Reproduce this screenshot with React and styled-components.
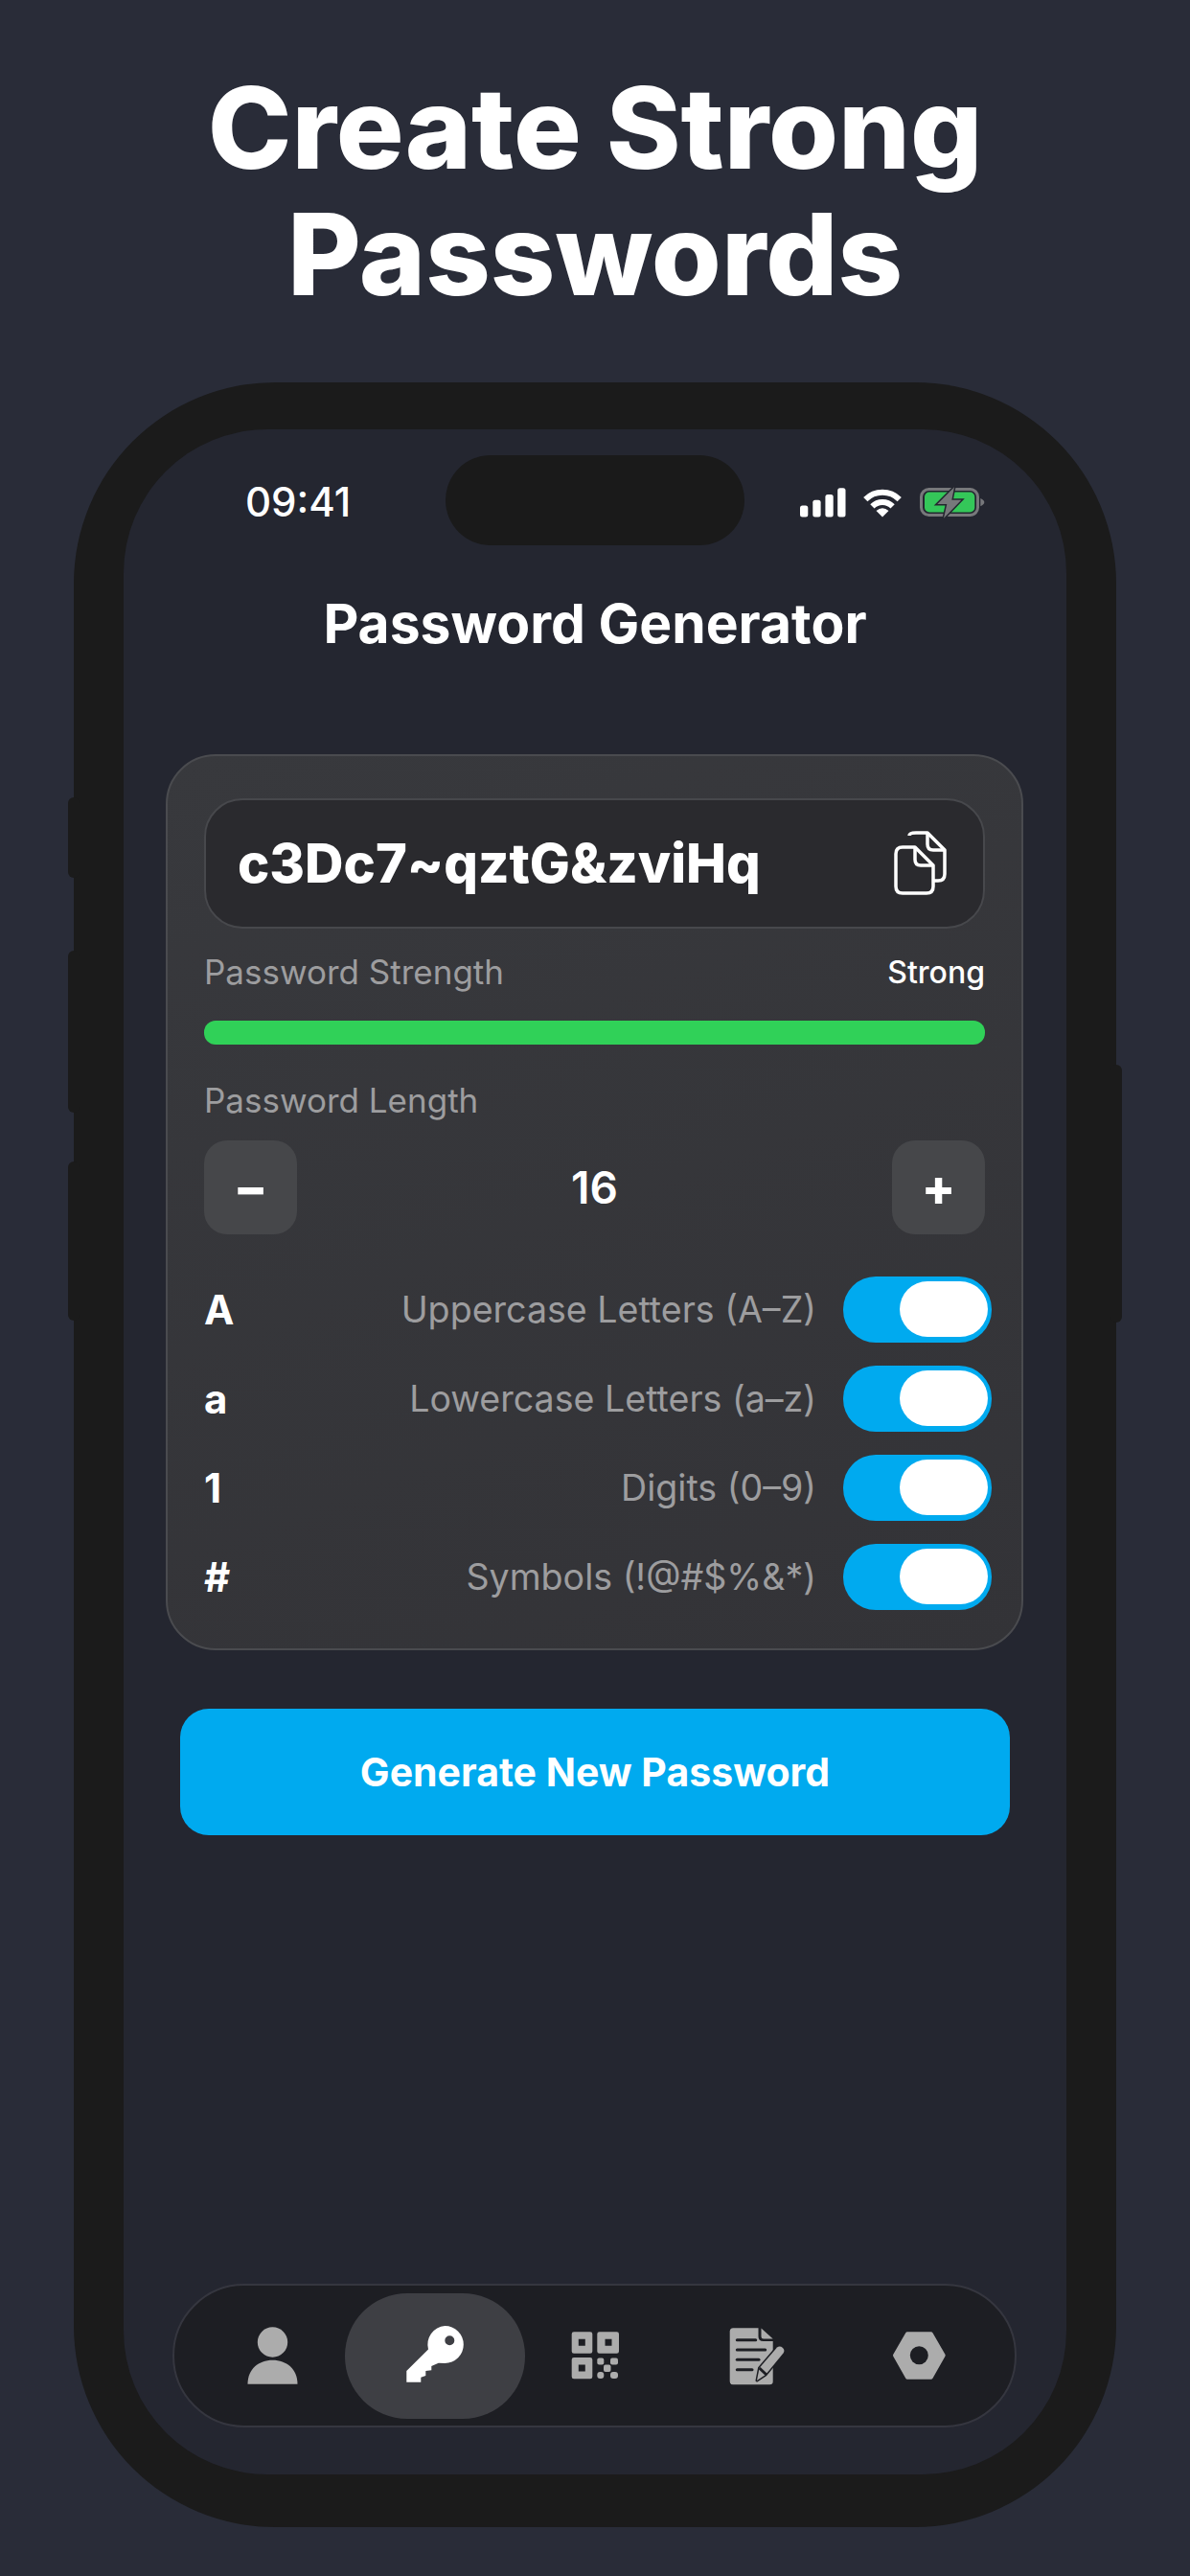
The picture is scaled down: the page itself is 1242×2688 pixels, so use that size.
import styled, { createGlobalStyle } from "styled-components";

const GlobalStyle = createGlobalStyle`
  html, body {
    margin: 0;
    padding: 0;
    background: #292c38;
  }
  * {
    box-sizing: border-box;
  }
`;

const OPTIONS = [
  { glyph: "A", label: "Uppercase Letters (A–Z)" },
  { glyph: "a", label: "Lowercase Letters (a–z)" },
  { glyph: "1", label: "Digits (0–9)" },
  { glyph: "#", label: "Symbols (!@#$%&*)" },
];

function SignalIcon() {
  return (
    <svg width="49" height="32" viewBox="0 0 49 32" fill="#fff">
      <rect x="1" y="19.5" width="8.3" height="12" rx="2.5" />
      <rect x="14.3" y="13.7" width="8.3" height="17.8" rx="2.5" />
      <rect x="27.4" y="8" width="8.3" height="23.5" rx="2.5" />
      <rect x="40.2" y="1.3" width="8.3" height="30.2" rx="2.5" />
    </svg>
  );
}

function WifiIcon() {
  return (
    <svg width="42" height="32" viewBox="0 0 42 32" fill="none" stroke="#fff" strokeWidth="6">
      <path d="M3.3 13.2 A25 25 0 0 1 38.7 13.2" />
      <path d="M10.4 20.4 A15 15 0 0 1 31.6 20.4" />
      <path d="M21 31.5 L14.5 25 Q21 19.5 27.5 25 Z" fill="#fff" stroke="none" />
    </svg>
  );
}

function BatteryIcon() {
  return (
    <svg width="69" height="35" viewBox="0 0 69 35" fill="none">
      <rect x="2.5" y="3.5" width="59" height="27" rx="8" stroke="#77787b" strokeWidth="3" />
      <rect x="6" y="6.5" width="52.3" height="21" rx="5" fill="#34c759" />
      <path d="M64.3 13 Q68.3 15 68.3 17 Q68.3 19.3 64.3 21.3 Z" fill="#77787b" />
      <path
        d="M37 1.3 L19.3 19 L29.3 19 L26 33.7 L44.3 14.7 L34.3 14.7 Z"
        fill="#77787b"
        stroke="#24262f"
        strokeWidth="3"
        paintOrder="stroke"
      />
    </svg>
  );
}

function CopyIcon() {
  return (
    <svg width="58" height="70" viewBox="0 0 58 70" fill="none" stroke="#fff" strokeWidth="3.5" strokeLinejoin="round">
      <path d="M17 6 Q17 3 24 3 H36 L54 21 V46 Q54 53 47 53 H42" />
      <path d="M36 3 V15 Q36 21 42 21 H54" />
      <path d="M10 18 H23 L42 37 V59 Q42 66 35 66 H10 Q3 66 3 59 V25 Q3 18 10 18 Z" />
      <path d="M23 18 V31 Q23 37 29 37 H42" />
    </svg>
  );
}

function PersonIcon() {
  return (
    <svg width="54" height="60" viewBox="0 0 54 60" fill="#acacac">
      <circle cx="26.5" cy="16" r="15.7" />
      <path d="M0.5 59.7 C0.5 44 12 34.7 26.5 34.7 S52.5 44 52.5 59.7 Z" />
    </svg>
  );
}

function KeyIcon() {
  return (
    <svg width="66" height="62" viewBox="0 0 66 62" fill="#fff">
      <path
        fillRule="evenodd"
        d="M43.3 0 A19.5 19.5 0 0 1 43.3 39 L36.7 38.7 L29.3 42 L29.3 46.3 L23.3 47 L23.3 52 L18.3 53.7 L18.3 58.7 L3.3 58.7 L3.3 47 L26 24.5 A19.5 19.5 0 0 1 43.3 0 Z M48.3 10.3 A5 5 0 1 0 48.3 20.3 A5 5 0 1 0 48.3 10.3 Z"
      />
    </svg>
  );
}

function QrIcon() {
  return (
    <svg width="52" height="52" viewBox="0 0 52 52" fill="#acacac">
      <path
        fillRule="evenodd"
        d="M3 1.3 H20 Q22.3 1.3 22.3 3.6 V21.4 Q22.3 23.7 20 23.7 H3 Q0.7 23.7 0.7 21.4 V3.6 Q0.7 1.3 3 1.3 Z M7.8 8.8 V15.8 H14.8 V8.8 Z"
      />
      <path
        fillRule="evenodd"
        d="M29.6 1.3 H47.7 Q50 1.3 50 3.6 V21.4 Q50 23.7 47.7 23.7 H29.6 Q27.3 23.7 27.3 21.4 V3.6 Q27.3 1.3 29.6 1.3 Z M35.5 8.8 V15.8 H42.5 V8.8 Z"
      />
      <path
        fillRule="evenodd"
        d="M3 28 H20 Q22.3 28 22.3 30.3 V48 Q22.3 50.3 20 50.3 H3 Q0.7 50.3 0.7 48 V30.3 Q0.7 28 3 28 Z M7.8 35.5 V42.5 H14.8 V35.5 Z"
      />
      <rect x="27.3" y="28.5" width="7" height="7" rx="2" />
      <rect x="41" y="28.5" width="8" height="7" rx="2" />
      <rect x="34" y="35.5" width="7.5" height="7.5" rx="2" />
      <rect x="27.3" y="43" width="7" height="7" rx="3" />
      <rect x="41" y="43" width="8" height="7" rx="3" />
    </svg>
  );
}

function NotesIcon() {
  return (
    <svg width="62" height="64" viewBox="0 0 62 64" fill="none">
      <path
        d="M6 3.3 H32.5 V12 Q32.5 17 37.5 17 H47.7 V59 Q47.7 62.3 44.4 62.3 H6 Q2.7 62.3 2.7 59 V6.6 Q2.7 3.3 6 3.3 Z"
        fill="#acacac"
      />
      <path d="M35.5 3.5 L47.7 14.5 H38 Q35.5 14.5 35.5 12 Z" fill="#acacac" />
      <g stroke="#1d1e23" strokeWidth="3" strokeLinecap="round">
        <path d="M10.3 15.7 H29.7" />
        <path d="M10.3 26 H39.7" />
        <path d="M10.3 36.3 H33" />
        <path d="M10.3 46.7 H26" />
      </g>
      <path
        d="M31 58 L33.5 45 L52 23.5 Q55 21.5 58 24 Q60.5 26.5 58.5 29.5 L40 52 Z"
        fill="#acacac"
        stroke="#1d1e23"
        strokeWidth="3"
        strokeLinejoin="round"
        paintOrder="stroke"
      />
      <path d="M33.5 45 L41 52" stroke="#1d1e23" strokeWidth="3" />
    </svg>
  );
}

function NutIcon() {
  return (
    <svg width="60" height="56" viewBox="0 0 60 56" fill="#acacac">
      <path
        fillRule="evenodd"
        stroke="#acacac"
        strokeWidth="4"
        strokeLinejoin="round"
        d="M5 27.7 L18 5.3 H42.7 L55.7 27.7 L42.7 50.7 H18 Z"
      />
      <circle cx="30.3" cy="27.7" r="9.5" fill="#1d1e23" />
    </svg>
  );
}

export default function App() {
  return (
    <Page>
      <GlobalStyle />
      <Headline>
        Create Strong
        <br />
        Passwords
      </Headline>
      <Phone>
        <SideButton $side="left" $top={433} $height={84} />
        <SideButton $side="left" $top={593} $height={169} />
        <SideButton $side="left" $top={813} $height={166} />
        <SideButton $side="right" $top={712} $height={269} />
        <Screen>
          <StatusBar>
            <Clock>09:41</Clock>
            <Island />
            <StatusIcons>
              <SignalIcon />
              <WifiIcon />
              <BatteryIcon />
            </StatusIcons>
          </StatusBar>
          <ScreenTitle>Password Generator</ScreenTitle>
          <Card>
            <PasswordBox>
              <PasswordText>c3Dc7~qztG&amp;zviHq</PasswordText>
              <CopyIcon />
            </PasswordBox>
            <StrengthRow>
              <MutedLabel>Password Strength</MutedLabel>
              <StrengthValue>Strong</StrengthValue>
            </StrengthRow>
            <StrengthBar />
            <LengthLabel>Password Length</LengthLabel>
            <Stepper>
              <StepButton>−</StepButton>
              <StepValue>16</StepValue>
              <StepButton>+</StepButton>
            </Stepper>
            <OptionList>
              {OPTIONS.map((option) => (
                <OptionRow key={option.label}>
                  <OptionGlyph>{option.glyph}</OptionGlyph>
                  <OptionLabel>{option.label}</OptionLabel>
                  <Toggle>
                    <ToggleKnob />
                  </Toggle>
                </OptionRow>
              ))}
            </OptionList>
          </Card>
          <GenerateButton>Generate New Password</GenerateButton>
          <TabBar>
            <Tab>
              <PersonIcon />
            </Tab>
            <Tab>
              <ActivePill>
                <KeyIcon />
              </ActivePill>
            </Tab>
            <Tab>
              <QrIcon />
            </Tab>
            <Tab>
              <NotesIcon />
            </Tab>
            <Tab>
              <NutIcon />
            </Tab>
          </TabBar>
        </Screen>
      </Phone>
    </Page>
  );
}

const Page = styled.div`
  width: 1242px;
  height: 2688px;
  overflow: hidden;
  background: #292c38;
  display: flex;
  flex-direction: column;
  align-items: center;
  font-family: "Inter", "Liberation Sans", sans-serif;
`;

const Headline = styled.h1`
  margin: 67px 0 0;
  height: 332px;
  font-family: "Inter", "Liberation Sans", sans-serif;
  font-size: 118px;
  font-weight: 800;
  line-height: 132px;
  text-align: center;
  color: #ffffff;
`;

const Phone = styled.div`
  position: relative;
  width: 1088px;
  height: 2238px;
  padding: 49px 52px 55px;
  background: #1b1b1b;
  border-radius: 210px;
`;

const SideButton = styled.div`
  position: absolute;
  top: ${(props) => props.$top}px;
  ${(props) => (props.$side === "left" ? "left: -6px;" : "right: -6px;")}
  width: 12px;
  height: ${(props) => props.$height}px;
  background: #1b1b1b;
  border-radius: 6px;
`;

const Screen = styled.div`
  height: 100%;
  background: #242630;
  border-radius: 150px;
  overflow: hidden;
  display: flex;
  flex-direction: column;
`;

const StatusBar = styled.div`
  display: grid;
  grid-template-columns: 336px 312px 336px;
  align-items: center;
  padding-top: 27px;
`;

const Clock = styled.div`
  padding-left: 127px;
  padding-top: 2px;
  font-size: 42px;
  font-weight: 500;
  color: #ffffff;
`;

const Island = styled.div`
  height: 94px;
  background: #1a1a1a;
  border-radius: 47px;
`;

const StatusIcons = styled.div`
  display: flex;
  justify-content: flex-end;
  align-items: center;
  gap: 17px;
  padding-right: 85px;
  padding-top: 4px;
`;

const ScreenTitle = styled.div`
  margin-top: 50px;
  font-size: 57px;
  font-weight: 700;
  line-height: 64px;
  text-align: center;
  color: #ffffff;
`;

const Card = styled.div`
  margin: 104px 45px 0 44px;
  padding: 44px 38px 42px;
  height: 935px;
  background: linear-gradient(160deg, #38393d, #333337);
  border: 2px solid #4a4b4f;
  border-radius: 52px;
`;

const PasswordBox = styled.div`
  height: 136px;
  padding: 0 36px 0 33px;
  display: flex;
  align-items: center;
  justify-content: space-between;
  background: #2a2a2e;
  border: 2px solid #47484c;
  border-radius: 40px;
`;

const PasswordText = styled.div`
  font-size: 56px;
  font-weight: 800;
  color: #ffffff;
`;

const StrengthRow = styled.div`
  margin-top: 25px;
  height: 40px;
  display: flex;
  align-items: center;
  justify-content: space-between;
`;

const MutedLabel = styled.div`
  font-size: 35px;
  font-weight: 400;
  line-height: 40px;
  color: #9d9d9f;
`;

const StrengthValue = styled.div`
  font-size: 32px;
  font-weight: 500;
  color: #ffffff;
`;

const StrengthBar = styled.div`
  margin-top: 31px;
  height: 25px;
  background: #30d158;
  border-radius: 12px;
`;

const LengthLabel = styled(MutedLabel)`
  margin-top: 38px;
`;

const Stepper = styled.div`
  margin-top: 22px;
  display: flex;
  align-items: center;
  justify-content: space-between;
`;

const StepButton = styled.div`
  width: 97px;
  height: 98px;
  display: flex;
  align-items: center;
  justify-content: center;
  background: #46474a;
  border-radius: 24px;
  font-size: 52px;
  font-weight: 800;
  color: #ffffff;
`;

const StepValue = styled.div`
  font-size: 46px;
  font-weight: 600;
  color: #ffffff;
`;

const OptionList = styled.div`
  margin-top: 44px;
  display: flex;
  flex-direction: column;
  gap: 24.5px;
`;

const OptionRow = styled.div`
  height: 68.5px;
  margin-right: -7px;
  display: flex;
  align-items: center;
`;

const OptionGlyph = styled.div`
  width: 80px;
  font-size: 42px;
  font-weight: 700;
  color: #ffffff;
`;

const OptionLabel = styled.div`
  flex: 1;
  margin-right: 28px;
  font-size: 37.6px;
  font-weight: 400;
  text-align: right;
  color: #9d9d9f;
`;

const Toggle = styled.div`
  width: 155px;
  height: 68.5px;
  padding: 5px 4.5px;
  display: flex;
  justify-content: flex-end;
  background: #00aaef;
  border-radius: 34px;
`;

const ToggleKnob = styled.div`
  width: 92px;
  height: 58px;
  background: #ffffff;
  border-radius: 29px;
`;

const GenerateButton = styled.div`
  margin: 61px 59px 0;
  height: 131.5px;
  display: flex;
  align-items: center;
  justify-content: center;
  background: #00aaef;
  border-radius: 30px;
  font-size: 41px;
  font-weight: 700;
  color: #ffffff;
`;

const TabBar = styled.div`
  margin: auto 52px 49px 51px;
  height: 150px;
  padding: 0 16px 0 19px;
  display: grid;
  grid-template-columns: repeat(5, minmax(0, 1fr));
  background: #1d1e23;
  border: 2px solid #35363f;
  border-radius: 75px;
`;

const Tab = styled.div`
  display: flex;
  align-items: center;
  justify-content: center;
`;

const ActivePill = styled.div`
  flex-shrink: 0;
  width: 188px;
  height: 131px;
  display: flex;
  align-items: center;
  justify-content: center;
  background: #3e3f44;
  border-radius: 65px;
`;
